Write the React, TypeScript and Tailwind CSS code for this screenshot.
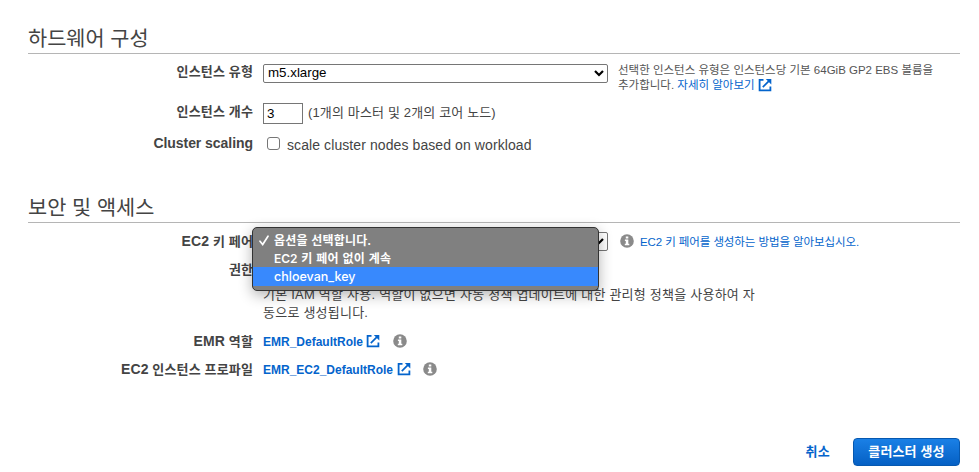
import type { ReactNode } from "react";

function ExternalIcon({ className = "" }: { className?: string }) {
  return (
    <svg className={`shrink-0 ${className}`} width="14" height="14" viewBox="0 0 14 14" fill="none" stroke="#0464cc">
      <path d="M5.5 1.8H1.6v10.6h10.8V8.6" strokeWidth="1.8" />
      <path d="M4.8 9.2L11.3 2.7" strokeWidth="1.7" />
      <path d="M7.8 0.9H13.3V6.4Z" fill="#0464cc" stroke="none" />
    </svg>
  );
}

function InfoIcon({ className = "" }: { className?: string }) {
  return (
    <svg className={`shrink-0 ${className}`} width="14" height="14" viewBox="0 0 14 14">
      <circle cx="7" cy="7" r="6.8" fill="#8a8a8a" />
      <path d="M5.8 2.4h2.5v2H5.8zM4.9 5.5h3.4v4.2h1v1.5H4.8V9.7h1V7H4.9z" fill="#fff" />
    </svg>
  );
}

function SelectArrow() {
  return (
    <svg className="shrink-0" width="10" height="8" viewBox="0 0 10 8" fill="none" stroke="#000" strokeWidth="2.2">
      <path d="M1 2l4 4 4-4" />
    </svg>
  );
}

function SectionTitle({ children }: { children: ReactNode }) {
  return (
    <h2 className="ml-7 mr-[19px] flex h-[30px] items-center border-b border-[#b5b5b5] text-[20.8px] leading-[28px] text-[#444]">
      {children}
    </h2>
  );
}

function Row({ label, className, children }: { label: ReactNode; className: string; children?: ReactNode }) {
  return (
    <div className={`flex items-center ${className}`}>
      <div className="mr-[10px] flex w-[253px] shrink-0 justify-end whitespace-nowrap font-bold text-[#444]">{label}</div>
      {children}
    </div>
  );
}

export default function App() {
  return (
    <div className="relative h-[472px] w-[979px] overflow-hidden bg-white pt-6 font-['Liberation_Sans','Noto_Sans_CJK_KR',sans-serif] text-[13px] leading-[18px] text-[#444]">
      <SectionTitle>하드웨어 구성</SectionTitle>
      <Row className="h-[38px]" label={<span className="-mt-[2px] tracking-[0.15px]">인스턴스 유형</span>}>
        <div className="flex h-[19px] w-[345px] items-center justify-between rounded-[2px] border border-[#767676] pl-1 pr-[3px] text-[13.33px] text-black">
          <span>m5.xlarge</span>
          <SelectArrow />
        </div>
        <div className="ml-[10px] mt-[9px] whitespace-nowrap text-[11.5px] leading-[15px] text-[#555]">
          <div>선택한 인스턴스 유형은 인스턴스당 기본 64GiB GP2 EBS 볼륨을</div>
          <div className="flex items-center">
            추가합니다.&nbsp;<a className="text-[#0464cc]">자세히 알아보기</a>
            <ExternalIcon className="ml-[3px]" />
          </div>
        </div>
      </Row>
      <Row className="h-[42px]" label={<span className="-mt-[2px] tracking-[0.15px]">인스턴스 개수</span>}>
        <div className="flex h-[21px] w-10 items-center border border-[#767676] pl-[3px] pt-px text-[13.33px] text-black">3</div>
        <span className="ml-[5px] whitespace-nowrap tracking-[0.15px]">(1개의 마스터 및 2개의 코어 노드)</span>
      </Row>
      <Row className="h-[20px]" label={<span className="-mt-[2px] text-[14px] tracking-[-0.05px]">Cluster scaling</span>}>
        <div className="-mt-[2px] ml-1 h-[13px] w-[13px] rounded-[3px] border border-[#767676]" />
        <span className="ml-[7px] mt-[2px] text-[14px] tracking-[0.09px]">scale cluster nodes based on workload</span>
      </Row>

      <div className="h-[39px]" />
      <SectionTitle>보안 및 액세스</SectionTitle>
      <Row className="h-[36px]" label={<span className="tracking-[0.15px]"><span className="text-[14px]">EC2</span> 키 페어</span>}>
        <div className="flex h-[19px] w-[345px] items-center justify-end rounded-[2px] border border-[#767676] pr-[3px]">
          <SelectArrow />
        </div>
        <InfoIcon className="ml-[12px]" />
        <a className="ml-[6px] mt-[2px] whitespace-nowrap text-[11.5px] tracking-[-0.09px] text-[#0464cc]">EC2 키 페어를 생성하는 방법을 알아보십시오.</a>
      </Row>
      <Row className="h-[20px]" label={<span className="mt-[2px]">권한</span>} />
      <div className="ml-[263px] mt-[7px] h-[36px] whitespace-nowrap tracking-[0.23px]">
        <div>기본 IAM 역할 사용. 역할이 없으면 자동 정책 업데이트에 대한 관리형 정책을 사용하여 자</div>
        <div>동으로 생성됩니다.</div>
      </div>
      <Row className="mt-[5px] h-[28px]" label={<span className="tracking-[0.15px]"><span className="text-[14px]">EMR</span> 역할</span>}>
        <a className="mt-[2px] text-[12px] font-bold text-[#0464cc]">EMR_DefaultRole</a>
        <ExternalIcon className="ml-[3px]" />
        <InfoIcon className="ml-[13px]" />
      </Row>
      <Row className="h-[28px]" label={<span className="tracking-[0.15px]"><span className="text-[14px]">EC2</span> 인스턴스 프로파일</span>}>
        <a className="mt-[2px] text-[12px] font-bold text-[#0464cc]">EMR_EC2_DefaultRole</a>
        <ExternalIcon className="ml-1" />
        <InfoIcon className="ml-[12px]" />
      </Row>

      <div className="mr-[19px] mt-[55px] flex h-[28px] items-center justify-end">
        <a className="mr-[23px] font-bold tracking-[0.3px] text-[#0464cc]">취소</a>
        <button className="flex h-[28px] w-[107px] items-center justify-center whitespace-nowrap rounded-[4px] border border-[#0658b0] bg-linear-to-b from-[#1a80e6] to-[#0560c4] font-bold tracking-[0.15px] text-white">
          클러스터 생성
        </button>
      </div>

      <div className="absolute left-[252px] top-[227px] h-[64px] w-[347px] rounded-[5px] border border-[#333] bg-[#808080] pt-[3px] text-[12px] font-bold leading-[18px] text-white shadow-[0_4px_14px_rgba(0,0,0,0.3)]">
        <div className="flex h-[18px] items-center tracking-[0.2px]">
          <svg className="ml-[6px] mr-[5px]" width="10" height="11" viewBox="0 0 10 11" fill="none" stroke="#fff" strokeWidth="1.7" strokeLinecap="round">
            <path d="M1 6.2L3.7 9.5L9 1.2" />
          </svg>
          <span className="mt-[2px]">옵션을 선택합니다.</span>
        </div>
        <div className="h-[18px] pl-[21px] pt-px tracking-[0.28px]"><span className="font-['Inter'] font-semibold tracking-normal">EC2</span> 키 페어 없이 계속</div>
        <div className="h-[19px] bg-[#3889fd] pl-[21px] pt-px font-['Inter'] text-[12.5px] font-medium">chloevan_key</div>
      </div>
    </div>
  );
}
